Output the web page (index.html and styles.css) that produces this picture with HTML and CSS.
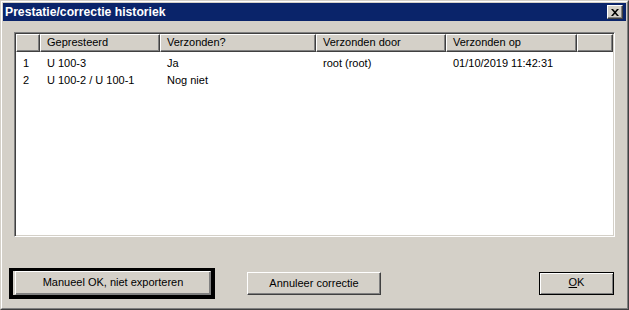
FILE: index.html
```html
<!DOCTYPE html>
<html>
<head>
<meta charset="utf-8">
<link rel="stylesheet" href="styles.css">
</head>
<body>
<div class="window">
  <div class="frame">
    <div class="titlebar">
      <span class="title">Prestatie/correctie historiek</span>
      <div class="close">
        <svg width="8" height="7" viewBox="0 0 8 7"><path d="M0 0h2l2 2.3 2-2.3h2l-3 3.5 3 3.5h-2l-2-2.3-2 2.3h-2l3-3.5z" fill="#000"/></svg>
      </div>
    </div>
    <div class="body">
      <div class="list">
        <div class="grid header">
          <div class="hcell"></div>
          <div class="hcell">Gepresteerd</div>
          <div class="hcell">Verzonden?</div>
          <div class="hcell">Verzonden door</div>
          <div class="hcell">Verzonden op</div>
          <div class="hcell"></div>
        </div>
        <div class="rows">
          <div class="grid row">
            <div class="cell">1</div>
            <div class="cell">U 100-3</div>
            <div class="cell">Ja</div>
            <div class="cell">root (root)</div>
            <div class="cell">01/10/2019 11:42:31</div>
            <div class="cell"></div>
          </div>
          <div class="grid row">
            <div class="cell">2</div>
            <div class="cell">U 100-2 / U 100-1</div>
            <div class="cell">Nog niet</div>
            <div class="cell"></div>
            <div class="cell"></div>
            <div class="cell"></div>
          </div>
        </div>
      </div>
      <div class="buttons">
        <div class="default-frame">
          <div class="btn btn-manueel">Manueel OK, niet exporteren</div>
        </div>
        <div class="btn btn-annuleer">Annuleer correctie</div>
        <div class="btn btn-ok"><u>O</u>K</div>
      </div>
    </div>
  </div>
</div>
</body>
</html>
```
FILE: styles.css
```css
* { box-sizing: border-box; }
html, body { margin: 0; padding: 0; }
body {
  width: 629px;
  height: 310px;
  background: #d4d0c8;
  font-family: "Liberation Sans", Arial, sans-serif;
  font-size: 11px;
  color: #000;
}
.window {
  width: 629px;
  height: 310px;
  border: 1px solid;
  border-color: #d4d0c8 #404040 #404040 #d4d0c8;
  background: #d4d0c8;
}
.frame {
  height: 100%;
  border: 1px solid;
  border-color: #fff #808080 #808080 #fff;
  padding: 1px;
  display: flex;
  flex-direction: column;
}
.titlebar {
  height: 18px;
  background: #0a246a;
  display: flex;
  align-items: center;
  padding-left: 2px;
}
.title {
  color: #fff;
  font-weight: bold;
  font-size: 12.2px;
  flex: 1;
  line-height: 18px;
}
.close {
  width: 16px;
  height: 14px;
  margin-right: 3px;
  background: #d4d0c8;
  border: 1px solid;
  border-color: #fff #404040 #404040 #fff;
  box-shadow: inset -1px -1px 0 #808080;
  display: flex;
  align-items: center;
  justify-content: center;
  padding-right: 1px;
}
.body {
  flex: 1;
  padding: 11px 0 0 0;
}
.list {
  margin: 0 11px;
  height: 205px;
  background: #fff;
  border: 1px solid;
  border-color: #808080 #fff #fff #808080;
  box-shadow: inset 1px 1px 0 #404040, inset -1px -1px 0 #d4d0c8;
  padding: 1px;
}
.grid {
  display: grid;
  grid-template-columns: 24px 120px 156px 130px 131px 1fr;
}
.header { height: 18px; }
.hcell {
  background: #d4d0c8;
  border-top: 1px solid #fff;
  border-left: 1px solid #fff;
  border-right: 1px solid #404040;
  border-bottom: 1px solid #404040;
  box-shadow: inset -1px -1px 0 #808080;
  padding-left: 6px;
  line-height: 15px;
  white-space: nowrap;
  overflow: hidden;
}
.rows { padding-top: 3px; }
.row { height: 17px; }
.cell {
  padding-left: 7px;
  line-height: 17px;
  white-space: nowrap;
}
.buttons {
  margin-top: 31px;
  display: flex;
  align-items: flex-start;
  padding-left: 6px;
  padding-right: 12px;
}
.default-frame {
  border-style: solid;
  border-color: #000;
  border-width: 3px 4px 4px 4px;
  padding-left: 2px;
  background: #d4d0c8;
}
.btn {
  background: #d4d0c8;
  border: 1px solid;
  border-color: #fff #404040 #404040 #fff;
  box-shadow: inset -1px -1px 0 #808080;
  text-align: center;
  white-space: nowrap;
}
.btn-manueel {
  width: 196px;
  height: 24px;
  line-height: 21px;
  border-color: #fff #808080 #808080 #fff;
}
.btn-annuleer {
  margin-top: 4px;
  margin-left: 32px;
  width: 134px;
  height: 23px;
  line-height: 20px;
}
.btn-ok {
  margin-top: 4px;
  margin-left: auto;
  width: 75px;
  height: 23px;
  line-height: 19px;
  border-color: #000;
  box-shadow: inset 1px 1px 0 #fff, inset -1px -1px 0 #808080;
}
```
